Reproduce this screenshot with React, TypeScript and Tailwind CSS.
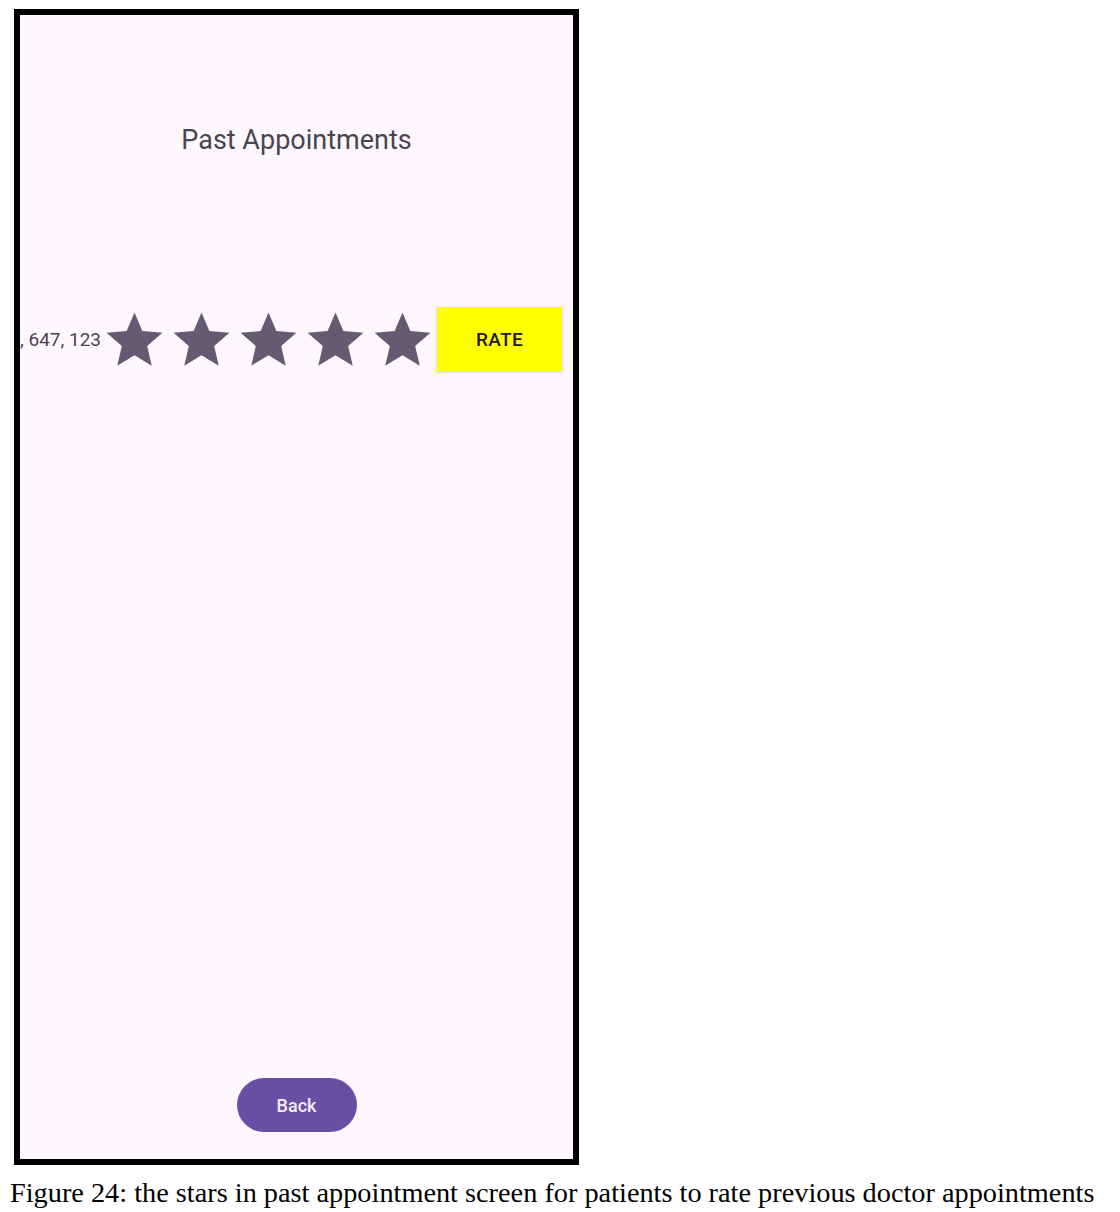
import React from "react";

const STAR_PATH =
  "M12 17.27L18.18 21l-1.64-7.03L22 9.24l-7.19-.61L12 2 9.19 8.63 2 9.24l5.46 4.73L5.82 21z";

function Star() {
  return (
    <svg viewBox="0 0 24 24" className="h-[67px] w-[67px] shrink-0" aria-hidden="true">
      <path d={STAR_PATH} fill="#625B71" />
    </svg>
  );
}

function RatingRow() {
  return (
    <div className="mt-[151px] flex h-[67px] items-start">
      <div className="flex h-[67px] w-[81px] shrink-0 items-center justify-end overflow-hidden whitespace-nowrap text-[19px] text-[#49454F]">
        , 647, 123
      </div>
      <div className="flex">
        {[0, 1, 2, 3, 4].map((i) => (
          <Star key={i} />
        ))}
      </div>
      <button
        type="button"
        className="ml-px flex h-[64px] w-[125px] shrink-0 items-center justify-center bg-[#FFFF00] pt-[2px] text-[19px] font-medium tracking-[0.02em] text-[#1D1B20] shadow-[0_1px_3px_rgba(0,0,0,0.2)]"
      >
        RATE
      </button>
    </div>
  );
}

export default function App() {
  return (
    <div className="min-h-[1212px] bg-white font-['Roboto',sans-serif]">
      <div className="ml-[14px] pt-[9px]">
        <div className="flex h-[1156px] w-[565px] flex-col border-[6px] border-black bg-[#FEF7FF]">
          <h1 className="mt-[110px] text-center text-[27px] leading-[31px] text-[#49454F]">
            Past Appointments
          </h1>
          <RatingRow />
          <div className="flex-1" />
          <div className="mb-[27px] flex justify-center">
            <button
              type="button"
              className="h-[54px] w-[120px] rounded-full bg-[#6750A4] text-[18px] font-medium text-[#F3EDF7]"
            >
              Back
            </button>
          </div>
        </div>
      </div>
      <p className="ml-[10px] mt-[12px] whitespace-nowrap font-['Liberation_Serif',serif] text-[28.3px] leading-[32px] text-black">
        Figure 24: the stars in past appointment screen for patients to rate previous doctor appointments
      </p>
    </div>
  );
}
